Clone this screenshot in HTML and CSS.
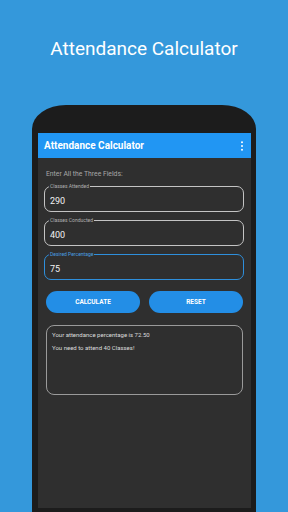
FILE: index.html
```html
<!DOCTYPE html>
<html lang="en">
<head>
  <meta charset="UTF-8" />
  <meta name="viewport" content="width=device-width, initial-scale=1.0" />
  <title>Attendance Calculator</title>
  <link rel="stylesheet" href="styles.css">
</head>
<body>
  <h1 class="promo-title">Attendance Calculator</h1>
  <div class="phone">
    <div class="screen">
      <div class="app-bar">
        <span class="app-title">Attendance Calculator</span>
        <svg class="kebab" width="4" height="10" viewBox="0 0 4 10">
          <circle cx="2" cy="1.3" r="1" fill="#fff"/>
          <circle cx="2" cy="5" r="1" fill="#fff"/>
          <circle cx="2" cy="8.7" r="1" fill="#fff"/>
        </svg>
      </div>
      <div class="content">
        <p class="hint">Enter All the Three Fields:</p>
        <div class="field">
          <span class="field-label">Classes Attended</span>
          <span class="field-value">290</span>
        </div>
        <div class="field">
          <span class="field-label">Classes Conducted</span>
          <span class="field-value">400</span>
        </div>
        <div class="field focused">
          <span class="field-label">Desired Percentage</span>
          <span class="field-value">75</span>
        </div>
        <div class="buttons">
          <button class="btn">CALCULATE</button>
          <button class="btn">RESET</button>
        </div>
        <div class="result">
          <p>Your attendance percentage is 72.50</p>
          <p>You need to attend 40 Classes!</p>
        </div>
      </div>
    </div>
  </div>
</body>
</html>
```
FILE: styles.css
```css
* {
  box-sizing: border-box;
  font-family: Roboto, 'Liberation Sans', sans-serif;
}
body {
  margin: 0;
  background: #3498db;
  height: 512px;
  overflow: hidden;
  display: flex;
  flex-direction: column;
  align-items: center;
}
.promo-title {
  color: #fff;
  font-size: 19px;
  font-weight: 400;
  margin: 0;
  padding-top: 37px;
  height: 105px;
  flex-shrink: 0;
}
.phone {
  width: 224px;
  height: 420px;
  background: #1c1c1c;
  border-radius: 34px 34px 0 0 / 24px 24px 0 0;
  padding: 28px 5px 0 6px;
  flex-shrink: 0;
}
.screen {
  background: #2f2f2f;
  height: 375px;
}
.app-bar {
  background: #2196f3;
  height: 25px;
  display: flex;
  align-items: center;
  justify-content: space-between;
  padding: 0 7px 0 6px;
}
.app-title {
  color: #fff;
  font-weight: 700;
  font-size: 10px;
}
.content {
  padding: 12px 7px 0 6px;
}
.hint {
  color: #a8a8a8;
  font-size: 6.8px;
  margin: 0 0 8px 2px;
}
.field {
  position: relative;
  height: 26px;
  border: 1px solid #c4c4c4;
  border-radius: 7px;
  margin-bottom: 8px;
  display: flex;
  align-items: center;
  padding-left: 5px;
}
.field.focused {
  border-color: #2e8fdc;
}
.field-label {
  position: absolute;
  top: -4px;
  left: 4px;
  font-size: 5px;
  color: #b0b0b0;
  background: #2f2f2f;
  padding: 0 1px;
  line-height: 7px;
}
.field.focused .field-label {
  color: #4a9fe0;
}
.field-value {
  color: #f2f2f2;
  font-size: 9px;
  padding-top: 3px;
}
.buttons {
  display: flex;
  gap: 9px;
  padding: 3px 1px 0 2px;
}
.btn {
  flex: 1;
  height: 22px;
  border: none;
  border-radius: 11px;
  background: #238ee6;
  color: #fff;
  font-weight: 700;
  font-size: 6.5px;
}
.result {
  margin: 12px 1px 0 2px;
  height: 70px;
  border: 1px solid #9a9a9a;
  border-radius: 8px;
  padding: 5px 5px;
}
.result p {
  color: #dcdcdc;
  font-size: 6px;
  margin: 0 0 6px;
}
```
